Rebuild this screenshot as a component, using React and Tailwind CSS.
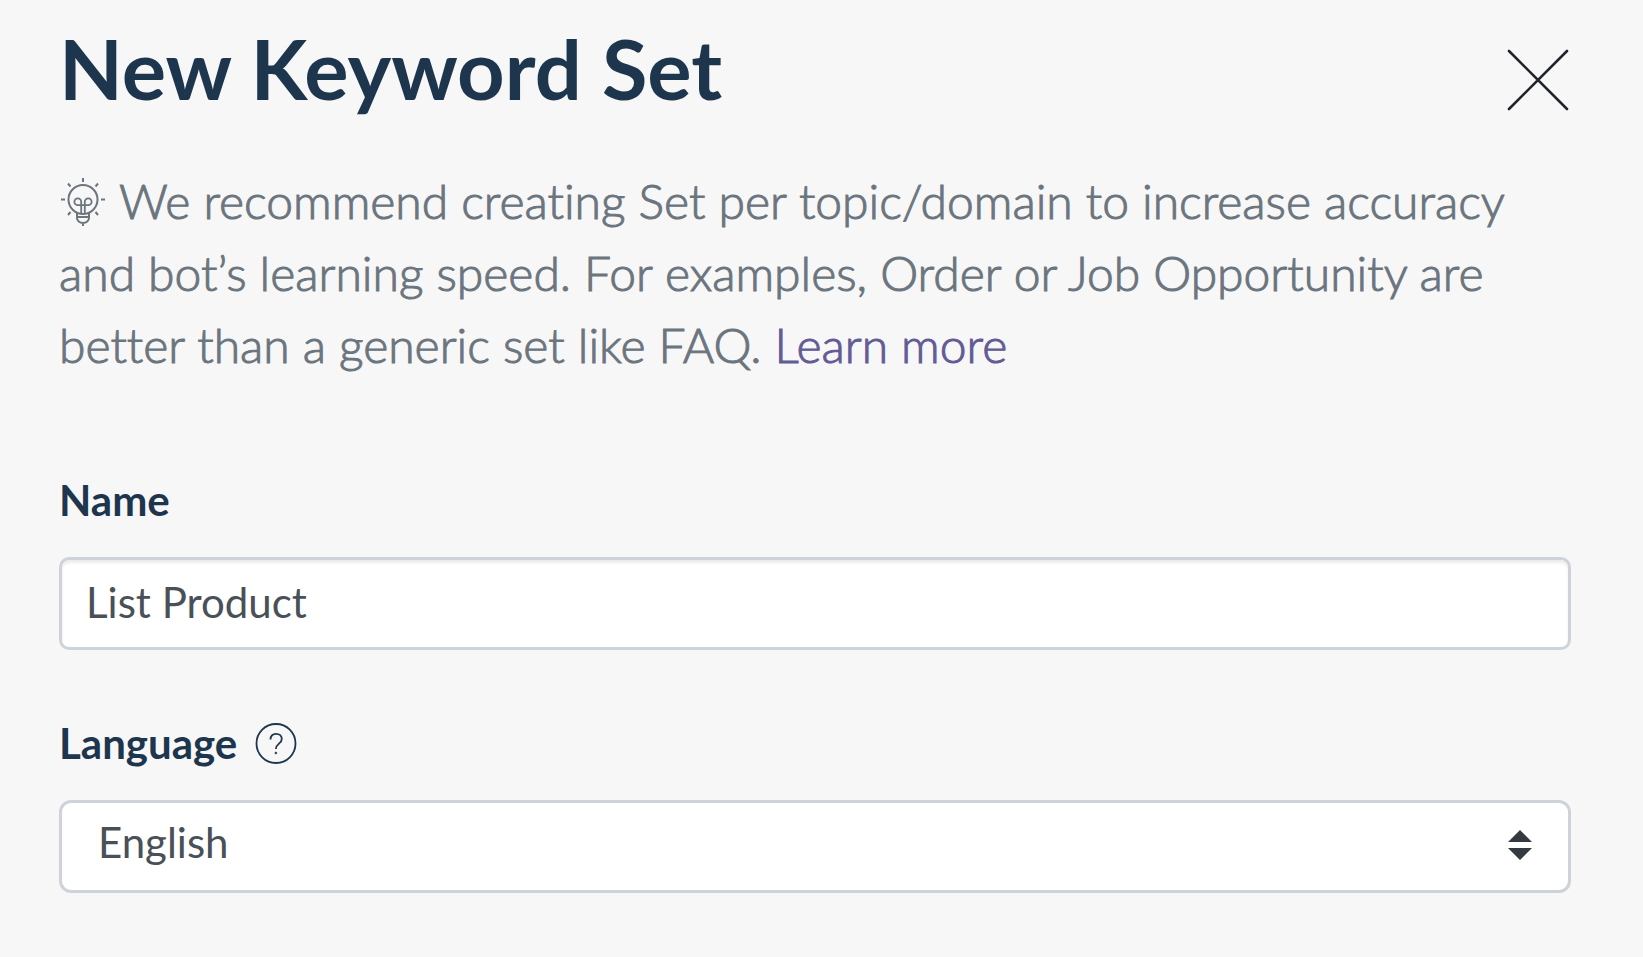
import { useState } from "react";

const LightbulbIcon = () => (
  <svg
    viewBox="0 0 48 50"
    className="inline-block w-12 h-[50px] align-[-8px]"
    fill="none"
    stroke="currentColor"
    strokeWidth="2"
    aria-hidden="true"
  >
    {/* rays */}
    <path d="M24 1v4M9 6.500l2.500 3M39 6.500l-2.500 3M2 22.500h4M42 22.500h4M9 38l2.500-3M39 38l-2.500-3" />
    {/* glass */}
    <circle cx="24" cy="22.500" r="14.500" />
    {/* filament */}
    <path
      strokeWidth="1.800"
      d="M22.200 36V24.700a3.400 3.400 0 1 0-3.400 3.400H29.200a3.400 3.400 0 1 0-3.400-3.400V36"
    />
    {/* socket */}
    <path d="M18 36v5a6 5 0 0 0 12 0v-5M18 40h12M24 46v3" />
  </svg>
);

const labelClass = "text-[42px] leading-[48px] font-bold text-[#1d364d]";

export default function App() {
  const [name, setName] = useState("List Product");
  const [language, setLanguage] = useState("en");

  return (
    <div
      className="min-h-screen bg-[#f7f7f7] pt-4 pl-[59px] pr-[72px] pb-16 font-['Lato',sans-serif] [font-variant-ligatures:none]"
    >
      <header className="flex items-start justify-between">
        <h1 className="text-[83px] leading-[104px] font-bold text-[#1d364d]">New Keyword Set</h1>
        <button type="button" aria-label="Close" className="mt-8 text-[#20242b]">
          <svg viewBox="0 0 64 64" className="size-16" stroke="currentColor" strokeWidth="2.600" strokeLinecap="round">
            <path d="M2 3l58 58M60 3L2 61" />
          </svg>
        </button>
      </header>

      <p className="mt-[45px] text-[48px] leading-[72px] font-light text-[#6b757e] [-webkit-text-stroke:1px]">
        <LightbulbIcon /> We recommend creating Set per topic/domain to increase accuracy and bot’s learning speed. For
        examples, Order or Job Opportunity are better than a generic set like FAQ.{" "}
        <a href="#learn-more" className="text-[#635b96]">Learn more</a>
      </p>

      <form onSubmit={(e) => e.preventDefault()}>
        <div className="mt-[95px]">
          <label htmlFor="set-name" className={`block ${labelClass}`}>Name</label>
          <input
            id="set-name"
            type="text"
            value={name}
            onChange={(e) => setName(e.target.value)}
            className="mt-[33px] block w-full h-[93px] rounded-[10px] border-3 border-[#ced3da] bg-white px-6 pb-1 text-[42px] text-[#495057] shadow-[inset_0_3px_3px_rgba(0,0,0,0.08)] focus:outline-none"
          />
        </div>

        <div className="mt-[69px]">
          <div className="flex items-center gap-[18px]">
            <label htmlFor="set-language" className={labelClass}>Language</label>
            <button type="button" aria-label="About language" className="text-[#1d364d]">
              <svg viewBox="0 0 42 42" className="size-[42px]" fill="none" stroke="currentColor" strokeWidth="1.800">
                <circle cx="21" cy="21.500" r="19.500" />
                <path d="M15.500 17.500c0-3.600 2.300-5.700 5.600-5.700s5.700 2 5.700 5.200c0 4.800-5.900 4.600-5.900 10" />
                <circle cx="20.900" cy="31" r="1" fill="currentColor" strokeWidth="0.500" />
              </svg>
            </button>
          </div>
          <div className="relative mt-[33px]">
            <select
              id="set-language"
              value={language}
              onChange={(e) => setLanguage(e.target.value)}
              className="block w-full h-[93px] appearance-none rounded-xl border-3 border-[#ced3da] bg-white pl-9 pr-20 pb-2 text-[42px] text-[#495057] focus:outline-none"
            >
              <option value="en">English</option>
            </select>
            <svg
              viewBox="0 0 24 30"
              className="absolute right-[39px] top-[30px] w-6 h-[30px] fill-[#343a40] pointer-events-none"
              aria-hidden="true"
            >
              <path d="M0 12L12 0l12 12zM0 18h24L12 30z" />
            </svg>
          </div>
        </div>
      </form>
    </div>
  );
}
